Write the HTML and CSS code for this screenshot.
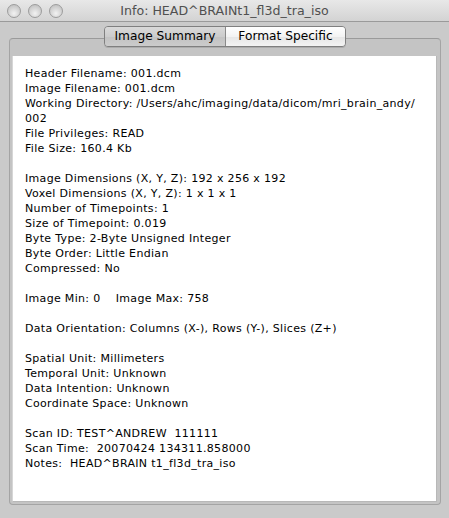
FILE: index.html
```html
<!DOCTYPE html>
<html>
<head>
<meta charset="utf-8">
<link rel="stylesheet" href="styles.css">
</head>
<body>
<div class="window">
  <div class="titlebar">
    <div class="lights">
      <span class="light"></span><span class="light"></span><span class="light"></span>
    </div>
    <div class="title">Info: HEAD^BRAINt1_fl3d_tra_iso</div>
  </div>
  <div class="body">
    <div class="tabview">
      <div class="tabs">
        <div class="tab selected">Image Summary</div>
        <div class="tab">Format Specific</div>
      </div>
      <div class="frame">
        <div class="content">
          <div>Header Filename: 001.dcm</div>
          <div>Image Filename: 001.dcm</div>
          <div>Working Directory: /Users/ahc/imaging/data/dicom/mri_brain_andy/</div>
          <div>002</div>
          <div>File Privileges: READ</div>
          <div>File Size: 160.4 Kb</div>
          <div class="gap"></div>
          <div>Image Dimensions (X, Y, Z): 192 x 256 x 192</div>
          <div>Voxel Dimensions (X, Y, Z): 1 x 1 x 1</div>
          <div>Number of Timepoints: 1</div>
          <div>Size of Timepoint: 0.019</div>
          <div>Byte Type: 2-Byte Unsigned Integer</div>
          <div>Byte Order: Little Endian</div>
          <div>Compressed: No</div>
          <div class="gap"></div>
          <div>Image Min: 0&nbsp;&nbsp;&nbsp;&nbsp;Image Max: 758</div>
          <div class="gap"></div>
          <div>Data Orientation: Columns (X-), Rows (Y-), Slices (Z+)</div>
          <div class="gap"></div>
          <div>Spatial Unit: Millimeters</div>
          <div>Temporal Unit: Unknown</div>
          <div>Data Intention: Unknown</div>
          <div>Coordinate Space: Unknown</div>
          <div class="gap"></div>
          <div>Scan ID: TEST^ANDREW&nbsp;&nbsp;111111</div>
          <div>Scan Time:&nbsp;&nbsp;20070424 134311.858000</div>
          <div>Notes:&nbsp;&nbsp;HEAD^BRAIN t1_fl3d_tra_iso</div>
        </div>
      </div>
    </div>
  </div>
</div>
</body>
</html>
```
FILE: styles.css
```css
html, body {
  margin: 0;
  padding: 0;
}
body {
  width: 449px;
  height: 518px;
  background: #cacaca;
  font-family: "DejaVu Sans", "Liberation Sans", sans-serif;
  overflow: hidden;
}
.window {
  width: 449px;
  height: 518px;
  display: flex;
  flex-direction: column;
}
.titlebar {
  background: linear-gradient(#e8e8e8, #d3d3d3);
  border-bottom: 1px solid #9a9a9a;
  display: flex;
  align-items: center;
  position: relative;
  box-sizing: border-box;
  height: 22px;
  flex: 0 0 22px;
}
.lights {
  display: flex;
  gap: 7px;
  padding-left: 7px;
}
.light {
  width: 12px;
  height: 12px;
  border-radius: 50%;
  background: radial-gradient(circle at 50% 70%, #f2f2f2 0%, #d2d2d2 55%, #b9b9b9 100%);
  border: 1px solid #9c9c9c;
  box-sizing: content-box;
}
.title {
  position: absolute;
  left: 0;
  right: 0;
  top: 0;
  line-height: 21px;
  text-align: center;
  font-size: 12.6px;
  color: #505050;
}
.body {
  flex: 1;
  padding: 16px 8px 13px 9px;
  box-sizing: border-box;
}
.tabview {
  position: relative;
  height: 100%;
}
.tabs {
  position: absolute;
  left: 95px;
  top: -12px;
  display: flex;
  border: 1px solid #7f7f7f;
  border-radius: 4px;
  overflow: hidden;
  height: 19px;
  z-index: 1;
  box-shadow: 0 1px 0 rgba(0,0,0,0.12);
}
.tab {
  width: 119px;
  text-align: center;
  font-size: 12.2px;
  line-height: 19px;
  color: #000;
  background: linear-gradient(#ffffff, #f3f3f3 50%, #e6e6e6 51%, #f4f4f4);
}
.tab.selected {
  width: 120px;
  border-right: 1px solid #8a8a8a;
  background: linear-gradient(#d9d9d9, #cccccc 50%, #c2c2c2 51%, #cbcbcb);
}
.frame {
  height: 100%;
  box-sizing: border-box;
  border: 1px solid #a4a4a4;
  border-top-color: #9a9a9a;
  border-radius: 4px;
  background: #c4c4c4;
  padding: 17px 3px 2px 2px;
}
.content {
  height: 100%;
  box-sizing: border-box;
  background: #fff;
  border: 1px solid #b8b8b8;
  border-top: none;
  border-left-color: #d6d6d6;
  padding: 10px 0 0 12px;
  font-size: 11px;
  line-height: 15px;
  letter-spacing: 0.32px;
  color: #000;
}
.gap {
  height: 15px;
}
```
